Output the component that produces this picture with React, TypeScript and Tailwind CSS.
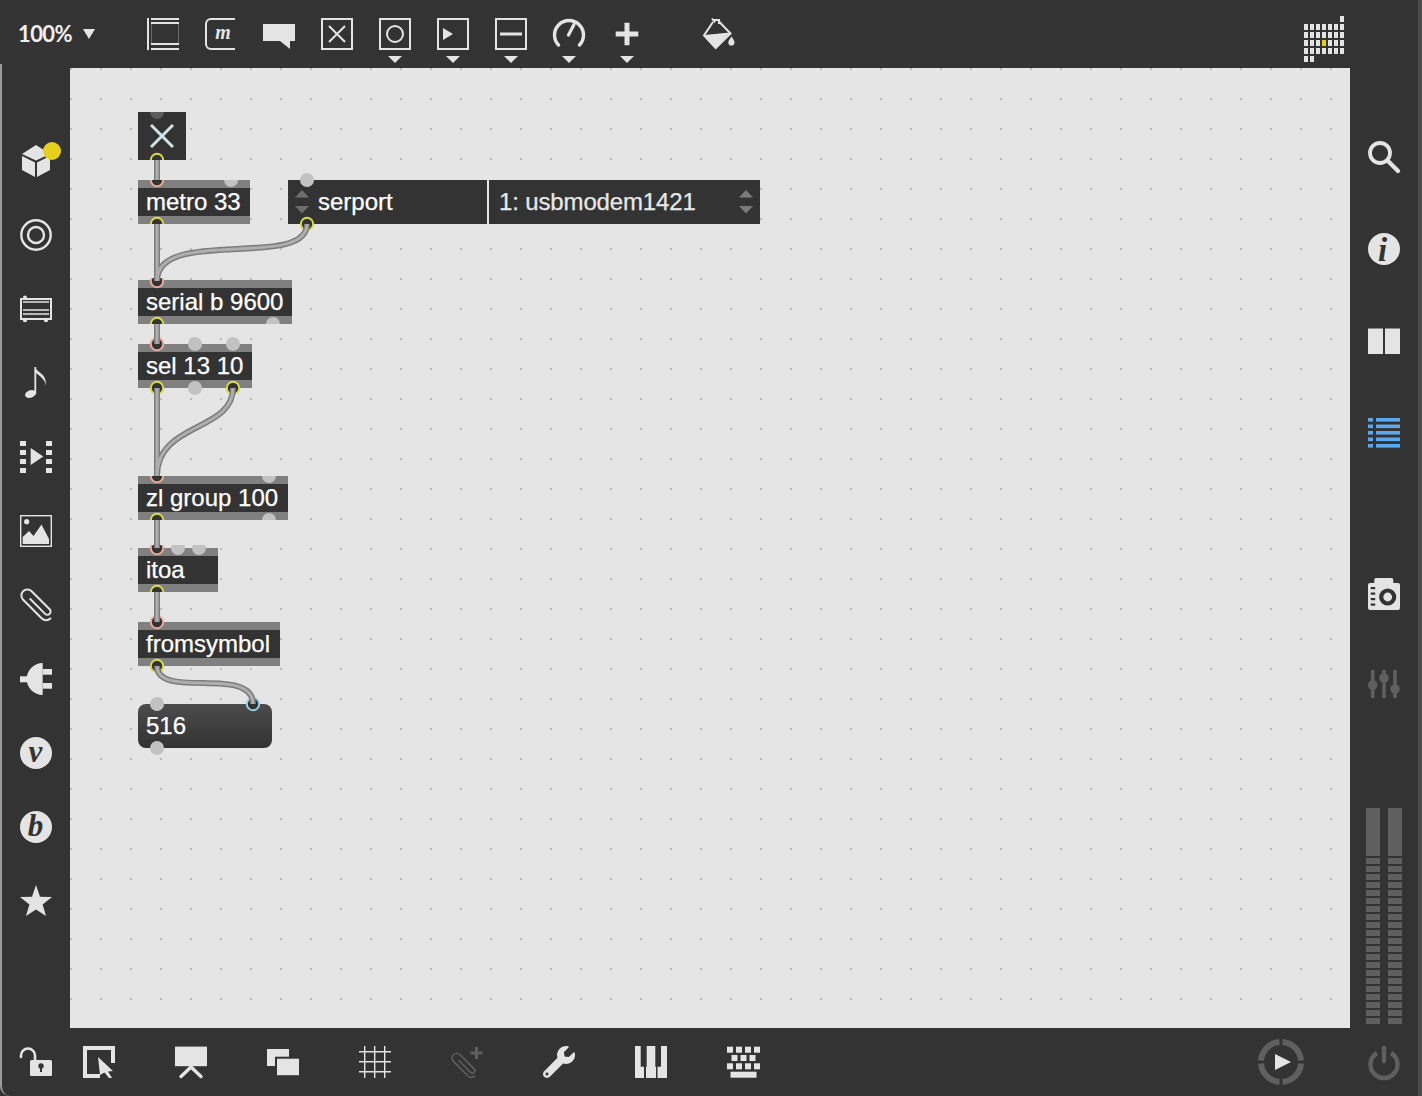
import React from "react";
import { FaWrench } from "react-icons/fa";

const L = "#e4e4e4";
const DIM = "#5f5f5f";
const BG = "#333333";

function Ic({ children, vb = "0 0 32 32", cls = "w-8 h-8" }: { children: React.ReactNode; vb?: string; cls?: string }) {
  return (
    <svg viewBox={vb} className={cls + " block overflow-visible"}>
      {children}
    </svg>
  );
}

function Arrow() {
  return (
    <svg viewBox="0 0 14 7" className="absolute left-[22px] top-[56px] w-[14px] h-[7px]">
      <polygon points="0,0 14,0 7,7" fill={L} />
    </svg>
  );
}

function TopBtn({ children, arrow }: { children: React.ReactNode; arrow?: boolean }) {
  return (
    <div className="relative w-[58px] h-[68px] flex items-center justify-center">
      {children}
      {arrow ? <Arrow /> : null}
    </div>
  );
}

const boxFrame = <rect x="1" y="1" width="30" height="30" fill="none" stroke={L} strokeWidth="2" />;

const Clip = ({ color = L }: { color?: string }) => (
  <g transform="translate(17 16) rotate(-45)">
    <path
      d="M-0.5 -9 V12 A3.2 3.2 0 0 0 5.9 12 V-13.5 A6 6 0 0 0 -6.1 -13.5 V13 A6 6 0 0 0 -0.1 19"
      fill="none"
      stroke={color}
      strokeWidth="2"
      strokeLinecap="round"
      strokeLinejoin="round"
    />
  </g>
);

function TopBar() {
  return (
    <div className="relative h-[68px] flex items-stretch shrink-0">
      <div className="absolute left-0 bottom-0 w-[2px] h-[4px] bg-[#9a9a9a]" />
      <div className="w-[134px] pl-[18px] flex items-center gap-[11px]">
        <span className="text-[22px] font-bold tracking-[-0.6px] text-[#efefef] font-['Lato',sans-serif] leading-none">100%</span>
        <svg viewBox="0 0 12 10" className="w-[12px] h-[10px]">
          <polygon points="0,0 12,0 6,10" fill={L} />
        </svg>
      </div>
      <TopBtn>
        <Ic>
          <rect x="0" y="0" width="2" height="32" fill={L} />
          <rect x="4" y="0" width="28" height="2" fill={L} />
          <rect x="4" y="4" width="28" height="2" fill={L} />
          <rect x="4" y="25" width="28" height="2" fill={L} />
          <rect x="4" y="30" width="28" height="2" fill={L} />
          <rect x="4" y="6" width="0.8" height="19" fill="#777" />
          <rect x="31" y="6" width="0.8" height="19" fill="#777" />
        </Ic>
      </TopBtn>
      <TopBtn>
        <Ic>
          <path d="M30 1 H6 A5 5 0 0 0 1 6 V26 A5 5 0 0 0 6 31 H30" fill="none" stroke={L} strokeWidth="2" />
          <text x="18" y="21" textAnchor="middle" fontFamily="'Liberation Serif',serif" fontStyle="italic" fontWeight="700" fontSize="20" fill={L}>m</text>
        </Ic>
      </TopBtn>
      <TopBtn>
        <Ic>
          <path d="M0 6 H32 V23 H27 V31 L17 23 H0 Z" fill={L} />
        </Ic>
      </TopBtn>
      <TopBtn>
        <Ic>
          {boxFrame}
          <path d="M8 8 L24 24 M24 8 L8 24" stroke={L} strokeWidth="2" />
        </Ic>
      </TopBtn>
      <TopBtn arrow>
        <Ic>
          {boxFrame}
          <circle cx="16" cy="16" r="8" fill="none" stroke={L} strokeWidth="2" />
        </Ic>
      </TopBtn>
      <TopBtn arrow>
        <Ic>
          {boxFrame}
          <polygon points="6,10 16,16 6,22" fill={L} />
        </Ic>
      </TopBtn>
      <TopBtn arrow>
        <Ic>
          {boxFrame}
          <rect x="5" y="14.5" width="22" height="3" fill={L} />
        </Ic>
      </TopBtn>
      <TopBtn arrow>
        <Ic>
          <path d="M5.5 27 A14.5 14.5 0 1 1 26.5 27" fill="none" stroke={L} strokeWidth="3.4" strokeLinecap="round" />
          <path d="M15.5 17 L21 6.5" stroke={L} strokeWidth="3.2" strokeLinecap="round" />
        </Ic>
      </TopBtn>
      <TopBtn arrow>
        <Ic>
          <rect x="13.5" y="4.7" width="5" height="22.6" fill={L} rx="0.5" />
          <rect x="4.7" y="13.5" width="22.6" height="5" fill={L} rx="0.5" />
        </Ic>
      </TopBtn>
      <div className="ml-[34px]">
        <TopBtn>
          <Ic>
            <path d="M10 4 L1 17.5 L12.7 30 L27.5 15.5 L16 3.5" fill="none" stroke={L} strokeWidth="2" />
            <path d="M10 2 L16 2 L16 6 M9 0.5 L12 4.5" fill="none" stroke={L} strokeWidth="2" />
            <path d="M1.5 17 L27 14.5 L12.7 30 Z" fill={L} />
            <path d="M28.5 18.5 C30 21 31.5 22.5 31.5 24.5 A3.1 3.1 0 0 1 25.3 24.5 C25.3 22.5 27 21 28.5 18.5 Z" fill={L} />
          </Ic>
        </TopBtn>
      </div>
      <div className="ml-auto mr-[74px] flex items-center">
        <svg viewBox="0 0 40 48" className="w-[40px] h-[48px] mt-[12px] block">
          {[0, 6, 12, 18, 24, 30, 36].map((x) =>
            [8, 16, 24, 32].map((y) => (
              <rect key={x + "-" + y} x={x} y={y} width="4" height="6" fill={x === 18 && y === 24 ? "#e6cf1c" : L} />
            ))
          )}
          <rect x="36" y="0" width="4" height="6" fill={L} />
          <rect x="0" y="40" width="4" height="6" fill={L} />
          <rect x="6" y="40" width="4" height="6" fill={L} />
        </svg>
      </div>
    </div>
  );
}

function Side({ children }: { children: React.ReactNode }) {
  return <div className="h-[74px] flex items-center justify-center shrink-0">{children}</div>;
}

function LeftBar() {
  const letter = (ch: string) => (
    <Ic>
      <circle cx="16" cy="16" r="16" fill={L} />
      <text x="15.5" y="25" textAnchor="middle" fontFamily="'Liberation Serif',serif" fontStyle="italic" fontWeight="700" fontSize="31" fill={BG}>
        {ch}
      </text>
    </Ic>
  );
  return (
    <div className="w-[70px] shrink-0 border-l-2 border-[#9a9a9a] pt-[56px] flex flex-col">
      <Side>
        <Ic>
          <polygon points="16,0 2,9 16,15.5 30,9" fill={L} />
          <polygon points="2,11 15,17.5 15,32 2,25" fill={L} />
          <polygon points="17,17.5 30,11 30,25 17,32" fill={L} />
          <circle cx="32" cy="6" r="9" fill="#e8cf1e" />
        </Ic>
      </Side>
      <Side>
        <Ic>
          <circle cx="16" cy="16" r="14.7" fill="none" stroke={L} strokeWidth="2.4" />
          <circle cx="16" cy="16" r="8" fill="none" stroke={L} strokeWidth="2.4" />
        </Ic>
      </Side>
      <Side>
        <Ic>
          <rect x="1" y="6" width="30" height="20" fill="none" stroke={L} strokeWidth="2" />
          <path d="M3 9 H29 M3 17 H29 M3 21 H29" stroke={L} strokeWidth="1.4" />
          <circle cx="5" cy="4.5" r="2" fill={L} />
          <circle cx="5" cy="27" r="2.2" fill={L} />
          <circle cx="26" cy="27" r="2.2" fill={L} />
        </Ic>
      </Side>
      <Side>
        <Ic>
          <ellipse cx="10.5" cy="27" rx="5.6" ry="3.8" fill={L} transform="rotate(-18 10.5 27)" />
          <rect x="14.4" y="0" width="1.8" height="27" fill={L} />
          <path d="M15 0 C17 6 27 6 26 19 C25.5 13 20 9 16 6 Z" fill={L} />
        </Ic>
      </Side>
      <Side>
        <Ic>
          {[0, 9, 18, 27].map((y) => (
            <React.Fragment key={y}>
              <rect x="0" y={y} width="6" height="5" fill={L} />
              <rect x="26" y={y} width="6" height="5" fill={L} />
            </React.Fragment>
          ))}
          <polygon points="10.7,7 23.3,15.5 10.7,24" fill={L} />
        </Ic>
      </Side>
      <Side>
        <Ic>
          <rect x="0.7" y="0.7" width="30.6" height="30.6" fill="none" stroke={L} strokeWidth="1.4" />
          <circle cx="6.7" cy="6.7" r="2.6" fill={L} />
          <path d="M2.7 29 V22 L9 16 L13.5 21 L21.5 9.5 L29 24 V29 Z" fill={L} />
        </Ic>
      </Side>
      <Side>
        <Ic>
          <Clip />
        </Ic>
      </Side>
      <Side>
        <Ic>
          <path d="M22.7 0 A16 16 0 0 0 22.7 32 Z" fill={L} />
          <rect x="22.7" y="6" width="9.3" height="5.7" fill={L} />
          <rect x="22.7" y="20" width="9.3" height="5.7" fill={L} />
          <rect x="0" y="13.3" width="8" height="6" fill={L} />
        </Ic>
      </Side>
      <Side>{letter("v")}</Side>
      <Side>{letter("b")}</Side>
      <Side>
        <Ic>
          <polygon points="16,0 20,11.8 32,12 22.6,19.5 26,31 16,24.4 6,31 9.4,19.5 0,12 12,11.8" fill={L} />
        </Ic>
      </Side>
    </div>
  );
}

function RightBar() {
  return (
    <div className="w-[68px] shrink-0 flex flex-col pt-[43px] pl-[18px]">
      <div className="h-[92px] flex items-center">
        <Ic>
          <circle cx="12" cy="12" r="10" fill="none" stroke={L} strokeWidth="3.8" />
          <path d="M19.5 19.5 L30 30" stroke={L} strokeWidth="4.2" strokeLinecap="round" />
        </Ic>
      </div>
      <div className="h-[92px] flex items-center">
        <Ic>
          <circle cx="16" cy="16" r="16" fill={L} />
          <text x="14.5" y="28" textAnchor="middle" fontFamily="'Liberation Serif',serif" fontStyle="italic" fontWeight="700" fontSize="33" fill={BG}>i</text>
        </Ic>
      </div>
      <div className="h-[92px] flex items-center">
        <Ic>
          <rect x="0" y="3.5" width="15" height="25.5" fill={L} />
          <rect x="17" y="3.5" width="15" height="25.5" fill={L} />
        </Ic>
      </div>
      <div className="h-[92px] flex items-center">
        <Ic>
          {[1, 7.5, 14, 20.5, 27].map((y) => (
            <React.Fragment key={y}>
              <rect x="0" y={y} width="5" height="3.6" fill="#5aa9ec" />
              <rect x="8" y={y} width="24" height="3.6" fill="#5aa9ec" />
            </React.Fragment>
          ))}
        </Ic>
      </div>
      <div className="h-[90px] mt-[70px] flex items-center">
        <Ic>
          <path d="M6.3 5 V2 Q6.3 0 8.3 0 H23.3 Q25.3 0 25.3 2 V5 H30 Q32 5 32 7 V30 Q32 32 30 32 H2 Q0 32 0 30 V7 Q0 5 2 5 Z" fill={L} />
          <circle cx="19.7" cy="19" r="6.5" fill={L} stroke={BG} strokeWidth="4.2" />
          {[10, 15.5, 21, 26.5].map((y) => (
            <rect key={y} x="2.7" y={y - 1} width="4.5" height="2.2" fill={BG} />
          ))}
        </Ic>
      </div>
      <div className="h-[90px] flex items-center">
        <Ic>
          <path d="M4.7 2 V30 M16 2 V30 M27 2 V30" stroke={DIM} strokeWidth="3.6" />
          <circle cx="4.7" cy="17" r="4.8" fill={DIM} />
          <circle cx="16" cy="10" r="4.8" fill={DIM} />
          <circle cx="27" cy="21" r="4.8" fill={DIM} />
        </Ic>
      </div>
      <div className="mt-[79px] -ml-[2px] flex gap-[8px]">
        <Meter />
        <Meter />
      </div>
    </div>
  );
}

function Meter() {
  return (
    <div className="w-[14px] flex flex-col gap-[2px]">
      <div className="h-[48px] bg-[#5f5f5f]" />
      {Array.from({ length: 21 }).map((_, i) => (
        <div key={i} className="h-[6px] bg-[#5f5f5f]" />
      ))}
    </div>
  );
}

function Obj({ cls, text }: { cls: string; text: string }) {
  return (
    <div className={"absolute flex flex-col " + cls}>
      <div className="h-[8px] bg-[#808080]" />
      <div className="h-[28px] bg-[#333333] pl-[8px] text-[24px] leading-[28px] text-white whitespace-nowrap [-webkit-text-stroke:0.25px_white]">{text}</div>
      <div className="h-[8px] bg-[#808080]" />
    </div>
  );
}

type P = [number, number, string, string?];
const Y = "#d9d94e";
const R = "#eca99c";
const G = "#c2c2c2";
const C = "#93d3e2";

const ports: P[] = [
  [157, 112, "#5c5c5c", "c1"],
  [157, 160, Y, "c1"],
  [157, 180, R, "c2"],
  [231, 180, G, "c2"],
  [157, 224, Y, "c2"],
  [307, 180, G],
  [307, 224, Y],
  [157, 281, R, "c3"],
  [157, 324, Y, "c3"],
  [273, 324, G, "c3"],
  [157, 344, R],
  [195, 344, G],
  [233, 344, G],
  [157, 388, Y],
  [195, 388, G],
  [233, 388, Y],
  [157, 476, R, "c4"],
  [269, 476, G, "c4"],
  [157, 520, Y, "c4"],
  [269, 520, G, "c4"],
  [157, 548, R, "c5"],
  [178, 548, G, "c5"],
  [199, 548, G, "c5"],
  [157, 592, Y, "c5"],
  [157, 622, R],
  [157, 666, Y],
  [157, 704, G],
  [253, 704, C],
  [157, 748, G],
];

const cords = [
  "M157 160 V180",
  "M157 224 V281",
  "M307 224 C307 270 157 226 157 281",
  "M157 324 V344",
  "M157 388 V476",
  "M233 388 C233 432 157 422 157 476",
  "M157 520 V548",
  "M157 592 V622",
  "M157 666 C157 700 253 665 253 704",
];

function Canvas() {
  return (
    <div className="relative flex-1 bg-[#e5e5e5] bg-[radial-gradient(circle_at_1px_1px,#bcbcbc_1px,transparent_1.3px)] bg-[size:30px_30px] font-['Liberation_Sans',Arial,sans-serif]">
      <div className="absolute left-[68px] top-[44px] w-[48px] h-[48px] bg-[#333333] flex items-center justify-center">
        <svg viewBox="0 0 24 24" className="w-[24px] h-[24px]">
          <path d="M1 1 L23 23 M23 1 L1 23" stroke="#cfe3e3" strokeWidth="3" />
        </svg>
      </div>
      <Obj cls="left-[68px] top-[112px] w-[112px]" text="metro 33" />
      <Obj cls="left-[68px] top-[212px] w-[154px]" text="serial b 9600" />
      <Obj cls="left-[68px] top-[276px] w-[114px]" text="sel 13 10" />
      <Obj cls="left-[68px] top-[408px] w-[150px]" text="zl group 100" />
      <Obj cls="left-[68px] top-[480px] w-[80px]" text="itoa" />
      <Obj cls="left-[68px] top-[554px] w-[142px]" text="fromsymbol" />
      <div className="absolute left-[218px] top-[112px] w-[199px] h-[44px] bg-[#333333] pl-[30px] text-[24px] leading-[44px] text-white [-webkit-text-stroke:0.25px_white]">serport</div>
      <div className="absolute left-[419px] top-[112px] w-[271px] h-[44px] bg-[#333333] pl-[10px] text-[24px] leading-[44px] tracking-[-0.14px] text-[#e8e8e8] [-webkit-text-stroke:0.25px_#e8e8e8]">1: usbmodem1421</div>
      <div className="absolute left-[68px] top-[636px] w-[134px] h-[44px] rounded-[8px] bg-gradient-to-b from-[#4c4c4c] to-[#333333] pl-[8px] text-[24px] leading-[44px] text-white [-webkit-text-stroke:0.25px_white]">516</div>
      <svg viewBox="70 68 1280 960" className="absolute inset-0 w-full h-full pointer-events-none">
        <defs>
          <clipPath id="c1"><rect x="138" y="112" width="48" height="48" /></clipPath>
          <clipPath id="c2"><rect x="138" y="180" width="112" height="44" /></clipPath>
          <clipPath id="c3"><rect x="138" y="278" width="154" height="46" /></clipPath>
          <clipPath id="c4"><rect x="138" y="476" width="150" height="44" /></clipPath>
          <clipPath id="c5"><rect x="138" y="545" width="80" height="47" /></clipPath>
        </defs>
        <polygon points="302,190 309,197.5 295,197.5" fill="#6e6e6e" />
        <polygon points="295,206 309,206 302,213.5" fill="#6e6e6e" />
        <polygon points="746,190 753,197.5 739,197.5" fill="#7a7a7a" />
        <polygon points="739,206 753,206 746,213.5" fill="#7a7a7a" />
        {ports.map(([x, y, col, clip], i) => {
          const ring = col === Y || col === R || col === C;
          return (
            <circle
              key={i}
              cx={x}
              cy={y}
              r={ring ? 6.2 : 7}
              fill={ring ? "#333333" : col}
              stroke={ring ? col : "none"}
              strokeWidth={ring ? 2 : 0}
              clipPath={clip ? "url(#" + clip + ")" : undefined}
            />
          );
        })}
        {cords.map((d) => (
          <path key={d} d={d} fill="none" stroke="#7c7c7c" strokeWidth="6" />
        ))}
        {cords.map((d) => (
          <path key={d + "i"} d={d} fill="none" stroke="#aeaeae" strokeWidth="3" />
        ))}
      </svg>
    </div>
  );
}

function Bot({ children }: { children: React.ReactNode }) {
  return <div className="w-[92px] h-[68px] flex items-center justify-center shrink-0">{children}</div>;
}

function BottomBar() {
  return (
    <div className="h-[68px] shrink-0 flex border-l-2 border-[#9a9a9a] rounded-bl-[10px]">
      <div className="w-[51px] pl-[18px] flex items-center">
        <Ic>
          <path d="M1 11 V9.5 A7 7 0 0 1 15 9.5 V15" fill="none" stroke={L} strokeWidth="2.6" strokeLinecap="round" />
          <rect x="10" y="14" width="22" height="16" rx="1.5" fill={L} />
          <circle cx="21" cy="20" r="2.7" fill={BG} />
          <rect x="20" y="20" width="2" height="6" fill={BG} />
        </Ic>
      </div>
      <Bot>
        <Ic>
          <path d="M0 0 H32 V17 H28 V4 H4 V28 H17 V32 H0 Z" fill={L} />
          <polygon points="15,11 30,25 25,25.5 29,32 26,32 21.5,26.5 17,29" fill={L} />
        </Ic>
      </Bot>
      <Bot>
        <Ic>
          <rect x="0" y="0.6" width="32" height="19.6" fill={L} />
          <path d="M16 21 L6 30.5 M16 21 L26 30.5" stroke={L} strokeWidth="3.4" strokeLinecap="round" />
        </Ic>
      </Bot>
      <Bot>
        <Ic>
          <rect x="0" y="3" width="22" height="17" fill={L} />
          <rect x="8" y="10.7" width="24" height="20" fill={BG} />
          <rect x="10" y="12.7" width="22" height="16.5" fill={L} />
        </Ic>
      </Bot>
      <Bot>
        <Ic>
          <path d="M5.7 0 V32 M15.7 0 V32 M25.7 0 V32 M0 5.7 H32 M0 15.7 H32 M0 25.7 H32" stroke={L} strokeWidth="1.4" />
        </Ic>
      </Bot>
      <Bot>
        <Ic>
          <g transform="translate(0 7) scale(0.78)">
            <Clip color={DIM} />
          </g>
          <rect x="19.5" y="5.5" width="12" height="3" fill={DIM} />
          <rect x="24" y="1" width="3" height="12" fill={DIM} />
        </Ic>
      </Bot>
      <Bot>
        <FaWrench className="w-8 h-8" color={L} />
      </Bot>
      <Bot>
        <Ic>
          <path d="M0 0 H5.7 V20.7 H9 V32 H0 Z" fill={L} />
          <path d="M11.7 0 H20.3 V20.7 H21 V32 H11 V20.7 H11.7 Z" fill={L} />
          <path d="M26 0 H32 V32 H22.5 V20.7 H26 Z" fill={L} />
        </Ic>
      </Bot>
      <Bot>
        <Ic>
          {[0, 9, 18, 27].map((x) => (
            <rect key={"a" + x} x={x} y="0.7" width="6" height="6" fill={L} />
          ))}
          {[4.5, 13.5, 22.5].map((x) => (
            <rect key={"b" + x} x={x} y="9" width="6" height="6" fill={L} />
          ))}
          {[0, 9, 18, 27].map((x) => (
            <rect key={"c" + x} x={x} y="17.3" width="6" height="6" fill={L} />
          ))}
          <rect x="3.5" y="25.7" width="26" height="6" fill={L} />
        </Ic>
      </Bot>
      <div className="ml-[469px] flex items-center">
        <Ic vb="0 0 46 46" cls="w-[46px] h-[46px]">
          <g fill="none" stroke={DIM} strokeWidth="6">
            <path d="M24.5 3 A20 20 0 0 1 43 21.5 M43 24.5 A20 20 0 0 1 24.5 43 M21.5 43 A20 20 0 0 1 3 24.5 M3 21.5 A20 20 0 0 1 21.5 3" />
          </g>
          <polygon points="17,15 33,23 17,31" fill={L} />
        </Ic>
      </div>
      <div className="ml-[64px] flex items-center">
        <Ic>
          <path d="M9 7 A13.5 13.5 0 1 0 23 7" fill="none" stroke={DIM} strokeWidth="4.4" />
          <path d="M16 2 V15" stroke={DIM} strokeWidth="4.4" strokeLinecap="round" />
        </Ic>
      </div>
    </div>
  );
}

export default function App() {
  return (
    <div className="w-[1422px] h-[1096px] bg-[#333333] border-r-4 border-[#4b4b4b] flex flex-col overflow-hidden">
      <TopBar />
      <div className="flex flex-1 min-h-0">
        <LeftBar />
        <Canvas />
        <RightBar />
      </div>
      <BottomBar />
    </div>
  );
}
